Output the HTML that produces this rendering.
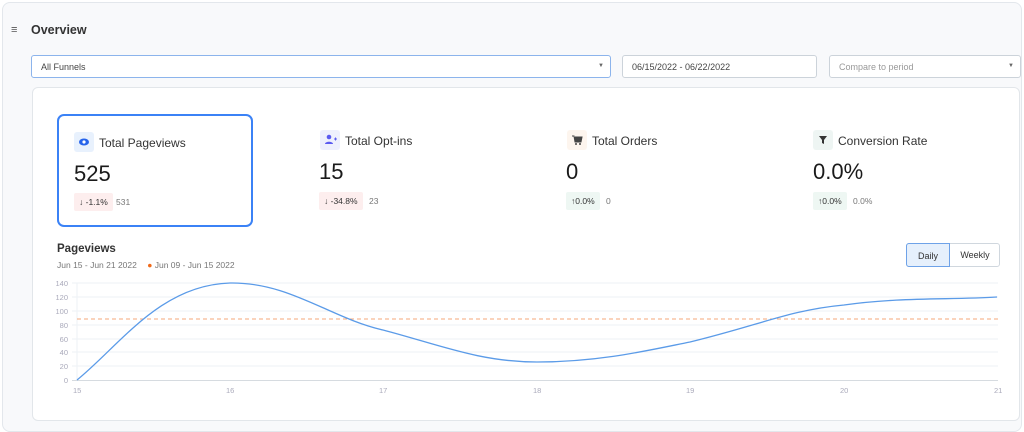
<!DOCTYPE html>
<html><head><style>
*{box-sizing:border-box;margin:0;padding:0}
body{width:1024px;height:423px;background:#fff;font-family:"Liberation Sans",sans-serif;position:relative;overflow:hidden;color:#222}
.outer{position:absolute;left:2px;top:2px;width:1020px;height:430px;background:#f8f9fb;border:1px solid #e3e7ec;border-radius:8px}
.abs{position:absolute}
.sel{position:absolute;height:23px;border:1px solid #ccd3da;border-radius:3px;background:#fff;font-size:9px;color:#444;padding:6px 0 0 9px}
.card{position:absolute;left:32px;top:87px;width:988px;height:334px;background:#fff;border:1px solid #e2e6ea;border-radius:6px}
.ic{position:absolute;width:20px;height:20px;border-radius:3px}
.t{position:absolute;font-size:12px;color:#333}
.n{position:absolute;font-size:22px;color:#1a1a1a}
.b{position:absolute;font-size:8.5px;padding:4px 5px;border-radius:2px;color:#333}
.g{position:absolute;font-size:8.5px;color:#777}
.yl{position:absolute;font-size:7.5px;color:#aab;width:20px;text-align:right;left:48px}
.xl{position:absolute;font-size:7.5px;color:#aab;top:386px}
</style></head><body>
<div class="outer"></div>
<div class="abs" style="left:11px;top:24px;font-size:11px;color:#555">≡</div>
<div class="abs" style="left:31px;top:23px;font-size:12.5px;font-weight:bold;color:#333">Overview</div>
<div class="sel" style="left:31px;top:55px;width:580px;border-color:#8cb4ec;border-width:1.5px">All Funnels<span style="position:absolute;right:6px;top:7px;font-size:6px;color:#666">▼</span></div>
<div class="sel" style="left:622px;top:55px;width:195px">06/15/2022 - 06/22/2022</div>
<div class="sel" style="left:829px;top:55px;width:192px;color:#999">Compare to period<span style="position:absolute;right:6px;top:7px;font-size:6px;color:#666">▼</span></div>
<div class="card"></div>
<div class="abs" style="left:57px;top:114px;width:196px;height:113px;border:2px solid #3b82f6;border-radius:7px"></div>

<div class="ic" style="left:74px;top:132px;background:#e8f1fd"><svg width="20" height="20"><ellipse cx="10" cy="10" rx="5" ry="3.5" fill="#2563eb"/><circle cx="10" cy="10" r="1.6" fill="#fff"/></svg></div>
<div class="t" style="left:99px;top:136px">Total Pageviews</div>
<div class="n" style="left:74px;top:161px">525</div>
<div class="b" style="left:74px;top:193px;background:#fdeeee">↓ -1.1%</div><div class="g" style="left:116px;top:197px">531</div>

<div class="ic" style="left:320px;top:130px;background:#eef0fd"><svg width="20" height="20"><circle cx="9" cy="7" r="2.3" fill="#5b5bf0"/><path d="M5 14c0-3 8-3 8 0z" fill="#5b5bf0"/><path d="M14 9h3M15.5 7.5v3" stroke="#5b5bf0" stroke-width="1"/></svg></div>
<div class="t" style="left:345px;top:134px">Total Opt-ins</div>
<div class="n" style="left:319px;top:159px">15</div>
<div class="b" style="left:319px;top:192px;background:#fdeeee">↓ -34.8%</div><div class="g" style="left:369px;top:196px">23</div>

<div class="ic" style="left:567px;top:130px;background:#fdf5ee"><svg width="20" height="20"><path d="M5 6h2l1 6h6l1-5H8" fill="#444" stroke="#444"/><circle cx="9" cy="14" r="1" fill="#444"/><circle cx="13" cy="14" r="1" fill="#444"/></svg></div>
<div class="t" style="left:592px;top:134px">Total Orders</div>
<div class="n" style="left:566px;top:159px">0</div>
<div class="b" style="left:566px;top:192px;background:#eef7f3">↑0.0%</div><div class="g" style="left:606px;top:196px">0</div>

<div class="ic" style="left:813px;top:130px;background:#eef5f3"><svg width="20" height="20"><path d="M6 6h8l-3 4v4l-2-1v-3z" fill="#333"/></svg></div>
<div class="t" style="left:838px;top:134px">Conversion Rate</div>
<div class="n" style="left:813px;top:159px">0.0%</div>
<div class="b" style="left:813px;top:192px;background:#eef7f3">↑0.0%</div><div class="g" style="left:853px;top:196px">0.0%</div>

<div class="abs" style="left:57px;top:243px;font-size:11.5px;font-weight:bold;color:#333">Pageviews</div>
<div class="abs" style="left:57px;top:260px;font-size:8.5px;color:#777">Jun 15 - Jun 21 2022 <span style="margin-left:8px;color:#f06a1a">●</span> Jun 09 - Jun 15 2022</div>
<div class="abs" style="left:906px;top:243px;width:94px;height:24px;border:1px solid #d0d7de;border-radius:3px;font-size:9px;color:#333">
<div style="position:absolute;left:-1px;top:-1px;width:44px;height:24px;background:#e6f0fc;border:1px solid #6ea2e8;border-radius:3px 0 0 3px;text-align:center;padding-top:7px">Daily</div>
<div style="position:absolute;left:43px;top:0;width:50px;text-align:center;padding-top:6px">Weekly</div></div>

<div class="yl" style="top:279px">140</div><div class="yl" style="top:293px">120</div><div class="yl" style="top:307px">100</div><div class="yl" style="top:321px">80</div><div class="yl" style="top:335px">60</div><div class="yl" style="top:348px">40</div><div class="yl" style="top:362px">20</div><div class="yl" style="top:376px">0</div>
<div class="xl" style="left:73px">15</div><div class="xl" style="left:226px">16</div><div class="xl" style="left:379px">17</div><div class="xl" style="left:533px">18</div><div class="xl" style="left:686px">19</div><div class="xl" style="left:840px">20</div><div class="xl" style="left:994px">21</div>
<svg class="abs" style="left:0;top:0" width="1024" height="423">
<g stroke="#eef2f6" stroke-width="1">
<line x1="72" y1="283" x2="998" y2="283"/><line x1="72" y1="297" x2="998" y2="297"/><line x1="72" y1="311" x2="998" y2="311"/><line x1="72" y1="325" x2="998" y2="325"/><line x1="72" y1="339" x2="998" y2="339"/><line x1="72" y1="352" x2="998" y2="352"/><line x1="72" y1="366" x2="998" y2="366"/><line x1="77" y1="283" x2="77" y2="380"/></g>
<line x1="72" y1="380.5" x2="998" y2="380.5" stroke="#d6dbe0"/>
<line x1="77" y1="319" x2="998" y2="319" stroke="#f4a77a" stroke-dasharray="4,3"/>
<path d="M77 380 C120 345,160 285,230 283 C290 282,330 318,383 330 C440 345,480 362,537 362 C600 362,650 350,690 342 C760 325,790 310,844 305 C900 297,950 300,997 297" fill="none" stroke="#5b9be8" stroke-width="1.3"/>
</svg>
</body></html>
